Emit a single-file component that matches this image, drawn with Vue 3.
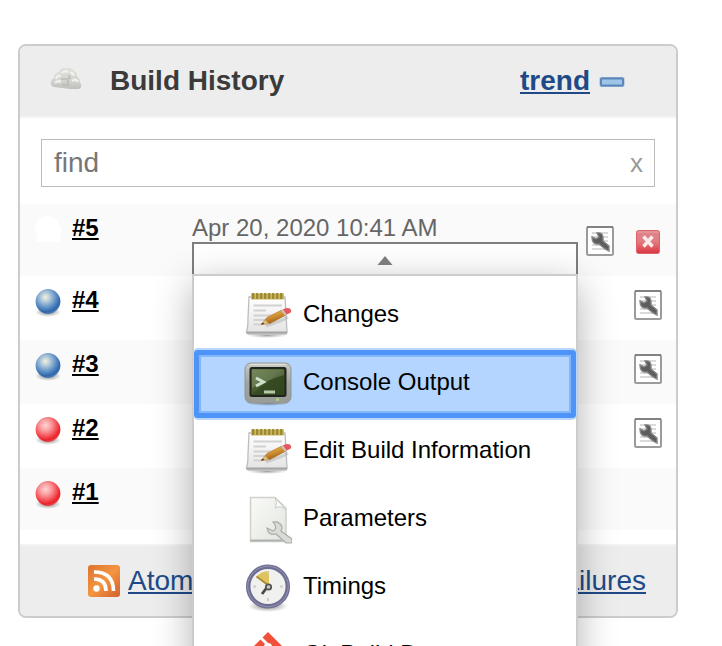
<script setup>
const builds = [
  { id: '#5', ball: 'none', date: 'Apr 20, 2020 10:41 AM', edit: true, stop: true },
  { id: '#4', ball: 'blue', edit: true },
  { id: '#3', ball: 'blue', edit: true },
  { id: '#2', ball: 'red', edit: true },
  { id: '#1', ball: 'red' },
]
const items = [
  { label: 'Changes', icon: 'notepad' },
  { label: 'Console Output', icon: 'terminal', active: true },
  { label: 'Edit Build Information', icon: 'notepad' },
  { label: 'Parameters', icon: 'document' },
  { label: 'Timings', icon: 'clock' },
  { label: 'Git Build Data', icon: 'git' },
]
</script>

<template>
  <div class="page">
    <svg class="defs" width="0" height="0">
      <defs>
        <radialGradient id="blue" cx=".4" cy=".33" r=".7">
          <stop offset="0" stop-color="#f0f2df" /><stop offset=".2" stop-color="#c3d4dc" />
          <stop offset=".58" stop-color="#6394c9" /><stop offset=".85" stop-color="#2d66ab" /><stop offset="1" stop-color="#5c87b7" />
        </radialGradient>
        <radialGradient id="red" cx=".4" cy=".33" r=".7">
          <stop offset="0" stop-color="#ffd5d5" /><stop offset=".3" stop-color="#fba2a4" />
          <stop offset=".62" stop-color="#f4585e" /><stop offset=".85" stop-color="#ed2027" /><stop offset="1" stop-color="#e65257" />
        </radialGradient>
        <radialGradient id="shade"><stop offset="0" stop-color="#333" stop-opacity=".65" /><stop offset="1" stop-color="#555" stop-opacity="0" /></radialGradient>
        <linearGradient id="stop" x2="0" y2="1"><stop offset="0" stop-color="#dd858b" /><stop offset=".5" stop-color="#e27b81" /><stop offset="1" stop-color="#db3440" /></linearGradient>
        <linearGradient id="paper" x2="0" y2="1"><stop offset="0" stop-color="#fff" /><stop offset="1" stop-color="#e3e3e3" /></linearGradient>
        <linearGradient id="pencil" x2=".5" y2="1"><stop offset="0" stop-color="#f2ca70" /><stop offset=".5" stop-color="#d99836" /><stop offset="1" stop-color="#8f5719" /></linearGradient>
        <linearGradient id="metal" x2="0" y2="1"><stop offset="0" stop-color="#c7c9c5" /><stop offset=".5" stop-color="#a1a39e" /><stop offset="1" stop-color="#9a9c97" /></linearGradient>
        <linearGradient id="screen" x2="1" y2="1"><stop offset="0" stop-color="#63754a" /><stop offset=".48" stop-color="#455a2c" /><stop offset=".5" stop-color="#384b23" /><stop offset="1" stop-color="#31431d" /></linearGradient>
        <linearGradient id="doc" x2="1" y2="1"><stop offset="0" stop-color="#fafbf8" /><stop offset="1" stop-color="#e2e5df" /></linearGradient>
        <linearGradient id="rss" x2="1" y2="1"><stop offset="0" stop-color="#dc742f" /><stop offset=".5" stop-color="#f49542" /><stop offset="1" stop-color="#d35f2d" /></linearGradient>
        <linearGradient id="cloud" x2="0" y2="1"><stop offset="0" stop-color="#dfdfdc" /><stop offset=".6" stop-color="#d3d4cf" /><stop offset="1" stop-color="#bfc0bc" /></linearGradient>
      </defs>
    </svg>

    <section class="panel">
      <header class="head">
        <svg class="cloud" width="32" height="24" viewBox="0 0 32 24">
          <path d="M4 20Q0 19 1 15Q1 12 4 11Q4 6 9 5Q12 0 16 1Q21 0 24 4Q27 5 27 9Q30 12 30 15Q33 20 29 22L20 22 12 21Z" fill="url(#cloud)" />
          <path d="M6 12Q7 8 11 9M12 6Q15 3 18 5M20 6Q23 5 24 9M5 16Q8 13 11 15M22 14Q26 11 28 15" fill="none" stroke="#efefec" stroke-width="2.400" />
          <path d="M11 12L18 12 18 20M19 8L20 12M12 18L17 18" fill="none" stroke="#bbbcb8" stroke-width="1.600" />
        </svg>
        <h1>Build History</h1>
        <a class="trend">trend</a>
        <svg width="28" height="12" viewBox="0 0 28 12">
          <rect x="1.5" y="1" width="25" height="10" rx="2" fill="#9db9d6" />
          <rect x="3" y="2.5" width="22" height="7" rx="1" fill="#9fc4e7" stroke="#5b87ba" stroke-width="2" />
        </svg>
      </header>

      <div class="search"><span>find</span><span class="clear">x</span></div>

      <div class="rows">
        <div v-for="b in builds" :key="b.id" class="row">
          <svg class="ball" width="32" height="32" viewBox="0 0 32 32">
            <template v-if="b.ball !== 'none'">
              <ellipse cx="16" cy="26" rx="13" ry="5" fill="url(#shade)" />
              <circle cx="16" cy="15.5" r="12.4" :fill="`url(#${b.ball})`" />
            </template>
            <path v-else d="M3 11Q7 3 13 2Q25 2 27 10Q31 17 28 23V28H5Q4 24 5 21Q1 16 3 11Z" fill="#fff" />
          </svg>
          <a class="num">{{ b.id }}</a>
          <span class="date">{{ b.date }}</span>
          <svg v-if="b.edit" class="tool" width="28" height="30" viewBox="0 0 28 30">
            <rect x="1" y="1" width="26" height="28" rx="1.5" fill="#fff" stroke="#9b9b9b" stroke-width="2" />
            <path d="M1 1H27" stroke="#828282" stroke-width="2" />
            <path d="M6 7H22M6 11H22M6 15H22M6 19H22M6 23H20" stroke="#cecece" stroke-width="1.7" />
            <path d="M11 7Q17 6 17 12L17 15 23 20V25L19 23 13 18Q6 19 6 11L10 13 13 11Z" fill="#5c5c5c" stroke="#858585" stroke-width="1.400" />
          </svg>
          <svg v-if="b.stop" class="stop" width="26" height="26" viewBox="0 0 26 26">
            <rect x="1.5" y="1.5" width="23" height="23" rx="2" fill="url(#stop)" stroke="#dc626b" />
            <path d="M3 3H23" stroke="#e9a2a6" /><path d="M8.5 7.500L17.5 17.500M17.5 7.500L8.5 17.500" stroke="#fbeaea" stroke-width="3.4" />
          </svg>
        </div>
      </div>

      <footer class="foot">
        <template v-for="label in ['Atom feed for all', 'Atom feed for failures']" :key="label">
          <svg width="32" height="32" viewBox="0 0 32 32">
            <rect width="32" height="32" rx="3" fill="url(#rss)" />
            <circle cx="8.5" cy="23.5" r="3.2" fill="#fff" />
            <path d="M6 14Q18 14 18 26M6 7Q25.5 7 25.5 26" fill="none" stroke="#fff" stroke-width="3.6" />
          </svg>
          <a>{{ label }}</a>
        </template>
      </footer>
    </section>

    <div class="popup">
      <div class="opener"><svg width="16" height="9" viewBox="0 0 16 9"><path d="M8 0L15.5 9H.5Z" fill="#818181" /></svg></div>
      <ul class="menu">
        <li v-for="item in items" :key="item.label" :class="{ active: item.active }">
          <svg width="48" height="48" viewBox="0 0 48 48">
            <g v-if="item.icon === 'notepad'">
              <ellipse cx="23" cy="43.500" rx="20" ry="2.500" fill="url(#shade)" opacity=".7" />
              <path d="M5 5H41L43 40Q43 42 41 42H5Q2 42 2.500 39.500Q4 36 4 26Z" fill="url(#paper)" stroke="#bdbdbd" stroke-width="1.300" />
              <path d="M3 40.500H43" stroke="#a5a5a5" stroke-width="2" />
              <path d="M9.500 13.500H38M9.500 18.500H22M9.500 23.500H31M9.500 28H22M9.500 32.500H18" stroke="#d2d2d2" stroke-width="2.200" />
              <path d="M7 4.500H40" stroke="#cdb85e" stroke-width="6" />
              <path d="M8 4H40" stroke="#9c8a35" stroke-width="6" stroke-dasharray="2.4 1.6" />
              <path d="M22 34L39 28 44 25" stroke="#999" stroke-width="3" opacity=".35" />
              <path d="M17 32.500L23 25.500 38 18 42 23 26 31.500Z" fill="url(#pencil)" stroke="#a9742e" stroke-width=".7" />
              <path d="M17 32.500L21 28 25 31.500Z" fill="#dfbd89" /><path d="M17 32.500L18.800 30.500 20.500 32Z" fill="#4d3519" />
              <path d="M37 18L40 17 44 22 41 23.500Z" fill="#c9c9c9" />
              <path d="M39 17.500Q42 15 46 16.500Q49 20 45 21.500L42.500 22.500Z" fill="#e4585e" />
            </g>
            <g v-else-if="item.icon === 'terminal'">
              <ellipse cx="24" cy="43" rx="22" ry="3" fill="url(#shade)" />
              <rect x="1" y="3" width="46" height="40" rx="6" fill="url(#metal)" stroke="#92948f" />
              <path d="M6 4.500H42" stroke="#deded9" stroke-width="1.500" />
              <rect x="6.500" y="8" width="35" height="28" rx="1.500" fill="url(#screen)" stroke="#20261c" stroke-width="2" />
              <path d="M8 9.500H40V15Q29 18 8 28Z" fill="#9dab86" opacity=".35" />
              <path d="M12 18L19.500 22 12 26" fill="none" stroke="#cfe2cb" stroke-width="3" />
              <path d="M20 32H31" stroke="#b4cbab" stroke-width="3" />
              <circle cx="33.500" cy="39.500" r="1.500" fill="#a9d77f" />
            </g>
            <g v-else-if="item.icon === 'document'">
              <path d="M6.500 1.500H31L42 12V45.500H6.500Z" fill="url(#doc)" stroke="#cfd1cd" stroke-width="1.500" />
              <path d="M6.500 44.500H38" stroke="#b0b2ae" stroke-width="2" />
              <path d="M31 1.500Q34 7 31 12Q37 9 42 14Z" fill="#fafaf9" stroke="#cacbc8" />
              <path d="M29 26Q36 25 38 31Q38 33 37 35L48 43V47H42L32 38Q24 40 23 32L29 35Q33 33 31 29Z" fill="#d9dcd6" stroke="#a9ada7" stroke-width="1.200" />
            </g>
            <g v-else-if="item.icon === 'clock'">
              <ellipse cx="24" cy="42" rx="20" ry="6" fill="url(#shade)" />
              <circle cx="24" cy="22.500" r="19.800" fill="#f0f0ee" stroke="#6f6f94" stroke-width="4.500" />
              <circle cx="24" cy="22.500" r="20.300" fill="none" stroke="#9393b0" stroke-width="1" />
              <path d="M24 22L12 13Q17 7 25 7V20Z" fill="#dec45f" /><path d="M24 21L12.500 12.500" stroke="#a98a33" stroke-width="1.600" />
              <path d="M24 22L18 30" stroke="#444a40" stroke-width="2.800" />
              <circle cx="24.500" cy="23" r="2.700" fill="#ccc" stroke="#555" stroke-width="1.800" />
              <path d="M24 8V10M24 34V37M36 22.500H39M9 22.500H12" stroke="#cbcbcd" stroke-width="2" />
            </g>
            <g v-else>
              <path d="M24 0L48 24 24 48 0 24Z" fill="#f05039" />
              <path d="M17 6L24 13V35M25 14L34 24" fill="none" stroke="#fff" stroke-width="3" /><circle cx="24" cy="15" r="4" fill="#fff" />
            </g>
          </svg>
          <span>{{ item.label }}</span>
        </li>
      </ul>
    </div>
  </div>
</template>

<style>
body { background: #fff; }
</style>
<style scoped>
* { box-sizing: border-box; }
.page { position: relative; width: 722px; height: 646px; padding: 44px 44px 0 18px; overflow: hidden; background: #fff; font-family: "Liberation Sans", Arial, sans-serif; }
.defs { position: absolute; }
svg { display: block; flex: none; }
.panel { width: 660px; height: 574px; border: 2px solid #ccc; border-radius: 8px; background: #fff; overflow: hidden; }
.head { height: 72px; display: flex; align-items: center; padding: 0 50px 0 30px; background: #ededed; border-bottom: 2px solid #f3f3f3; }
.cloud { margin-top: -5px; }
h1 { margin: 0 auto 0 28px; font-size: 28px; line-height: 32px; color: #3b3b3b; }
.head a, .foot a { font-size: 28px; line-height: 32px; color: #204a87; text-decoration: underline; text-decoration-thickness: 2px; text-underline-offset: 2px; }
.head .trend { font-weight: bold; margin-right: 8px; }
.head > svg:last-child { margin-top: 1px; }
.search { display: flex; align-items: center; justify-content: space-between; height: 48px; margin: 21px 21px 17px; padding: 0 11px 1px 12px; border: 1px solid #bcbcbc; font-size: 28px; line-height: 32px; color: #777; }
.clear { font-size: 26px; color: #999; padding-top: 1px; }
.rows { margin-bottom: 14px; }
.row { display: flex; align-items: flex-start; height: 64px; padding: 10px 14px 0 12px; }
.row:first-child { height: 72px; }
.row:last-child { height: 62px; }
.row:nth-child(odd) { background: #fafafa; }
.num { width: 120px; margin-left: 8px; font-size: 24px; line-height: 28px; font-weight: bold; color: #000; text-decoration: underline; text-decoration-thickness: 2px; text-underline-offset: 2px; }
.date { flex: 1; font-size: 24px; line-height: 28px; color: #666; }
.tool { margin-top: 4px; }
.row:first-child .tool { margin-top: 12px; margin-right: 21px; }
.stop { margin: 15px 0 0; }
.row:first-child { padding-right: 15px; }
.foot { height: 72px; display: flex; align-items: center; justify-content: flex-end; gap: 8px; padding-right: 30px; background: #ededed; border-top: 2px solid #f3f3f3; }
.foot a { white-space: nowrap; }
.popup { position: absolute; left: 192px; top: 242px; width: 386px; }
.opener { height: 32px; display: flex; justify-content: center; padding-top: 12px; border: 2px solid #7e7e7e; border-bottom: 0; background: #fff; }
.menu { position: relative; margin: 0; padding: 6px 0; list-style: none; background: #fff; border: 2px solid #ccc; box-shadow: 0 10px 36px rgba(0, 0, 0, .3); }
.menu li { height: 68px; display: flex; align-items: center; padding: 0 0 0 50px; font-size: 24px; line-height: 28px; color: #000; }
.menu li span { margin-left: 11px; margin-top: -5px; white-space: nowrap; }
.menu .active { background: #b3d5ff; border-radius: 4px; box-shadow: inset 0 0 0 5px #4e94f8, inset 0 0 0 7px #85b6fa, 0 -1px 0 1px #bcd7fc, 0 1px 0 1px #bcd7fc; }
</style>
